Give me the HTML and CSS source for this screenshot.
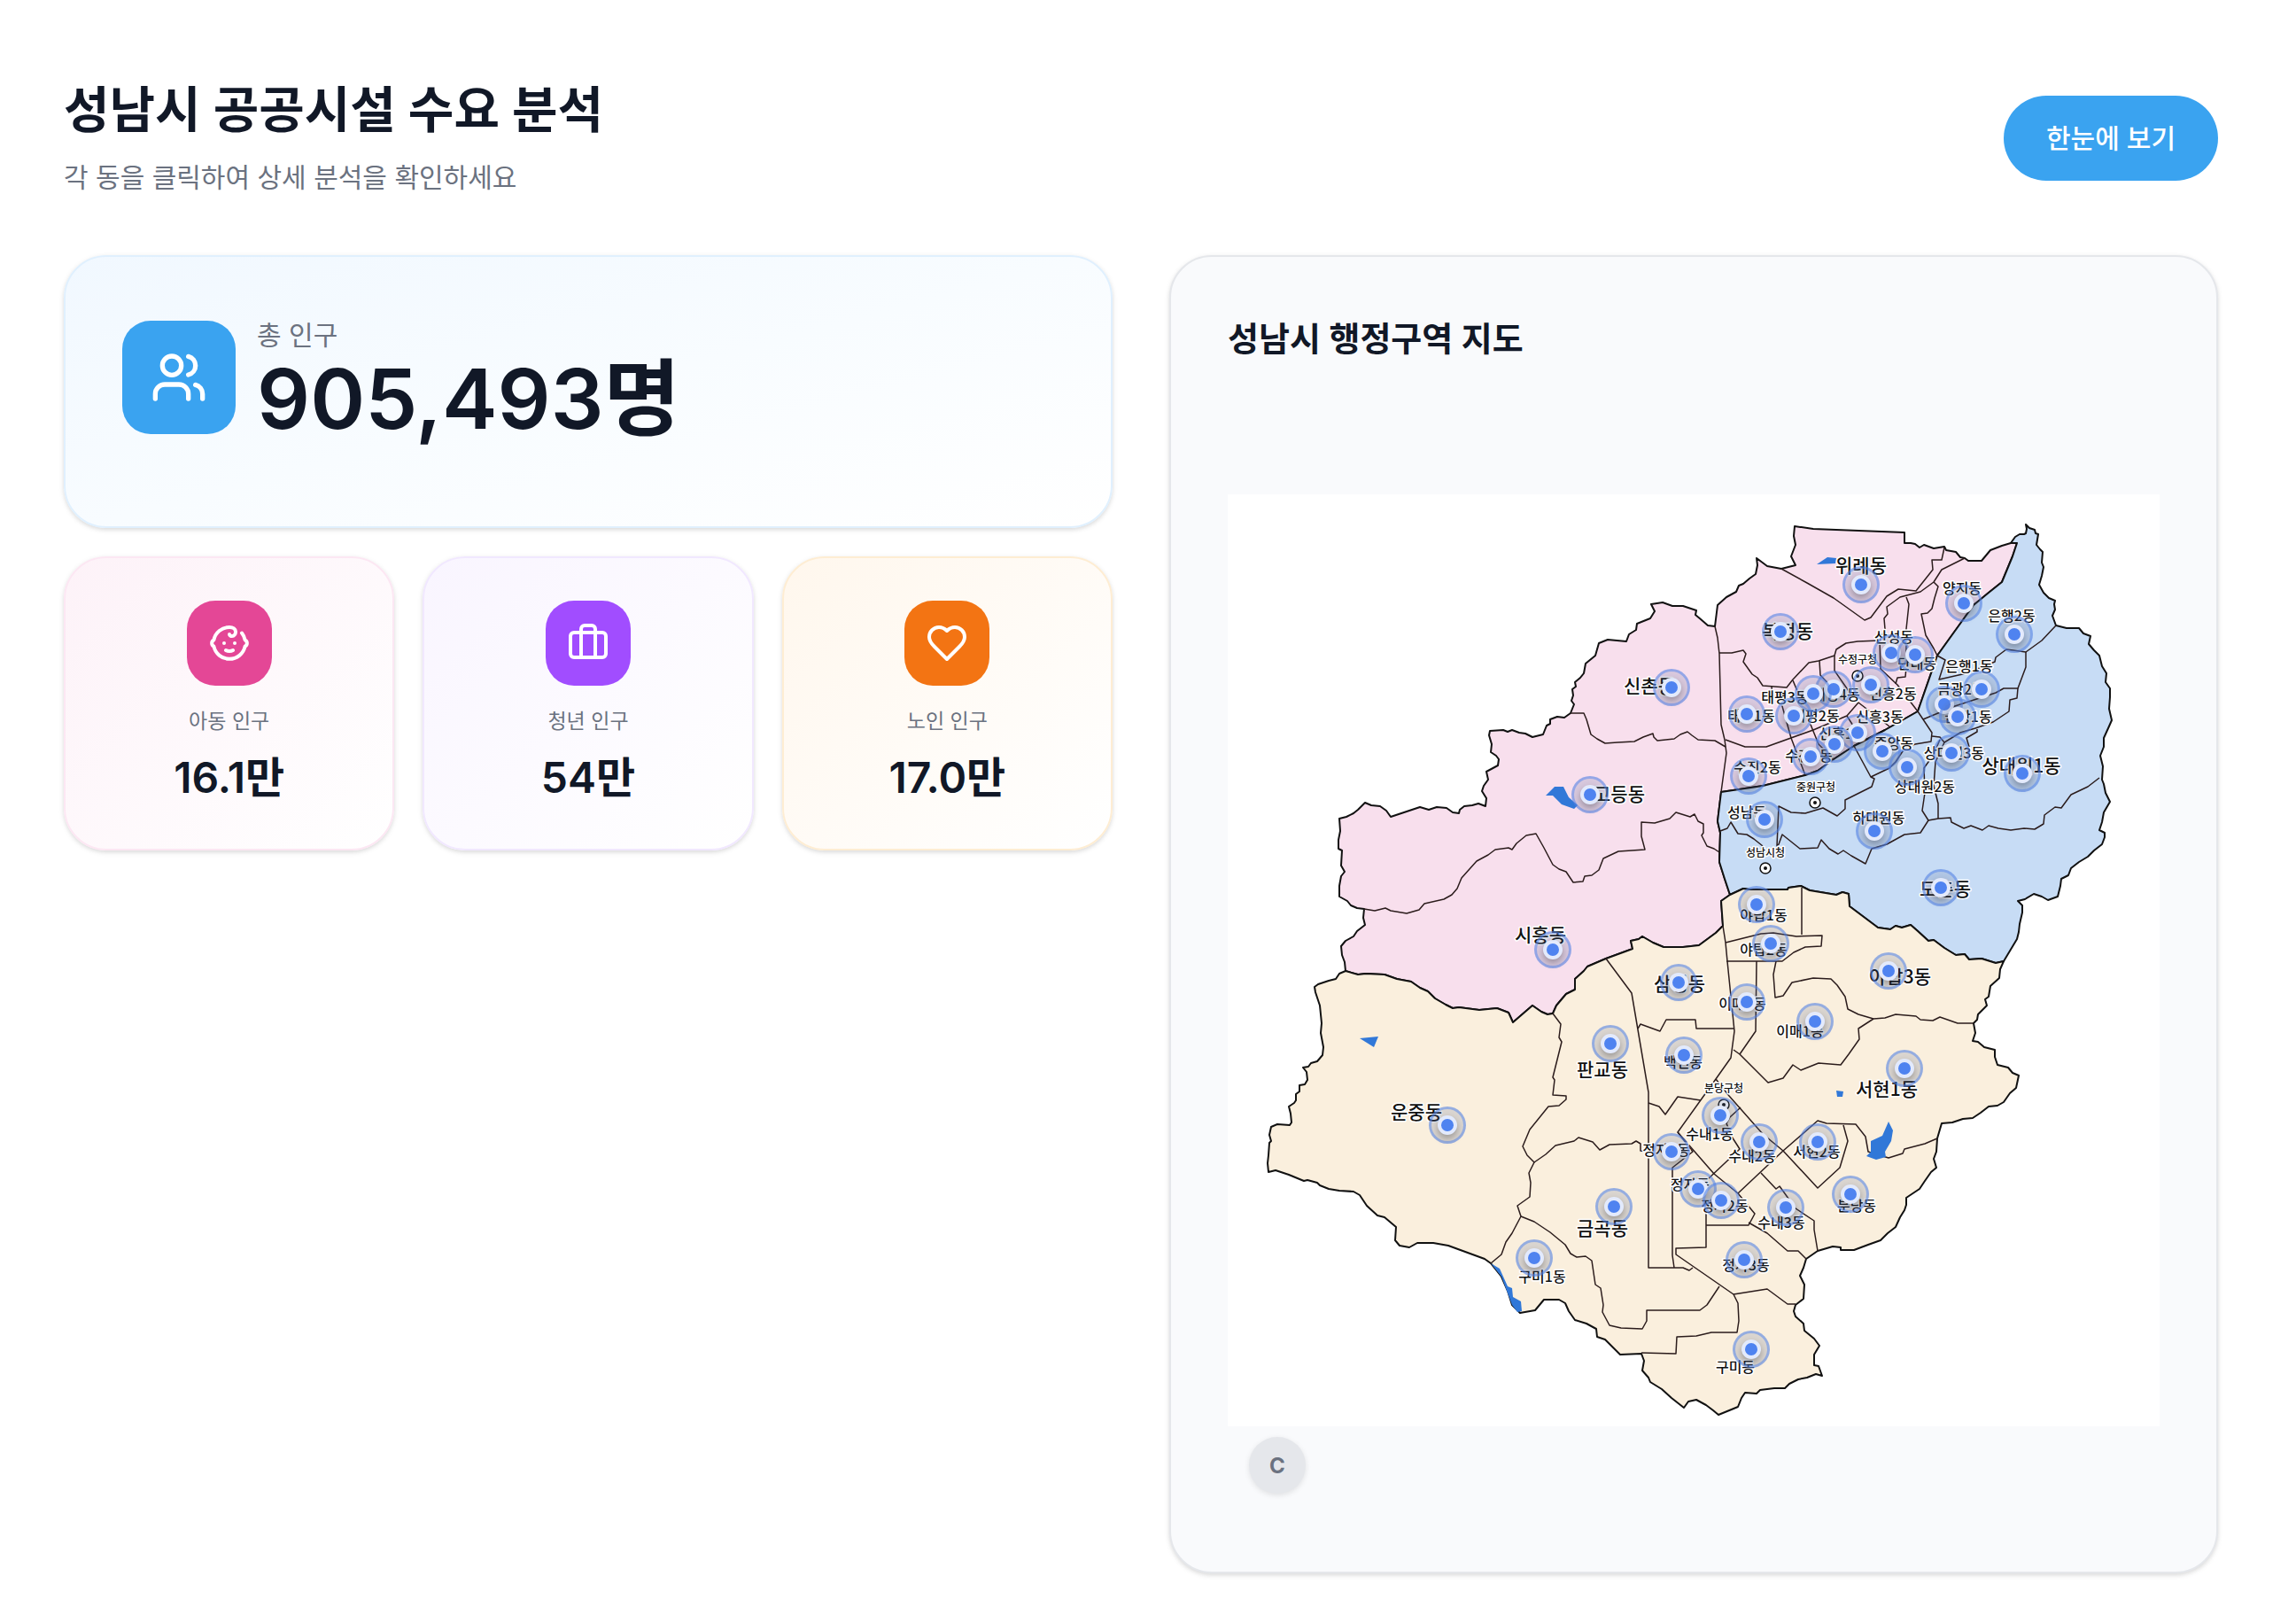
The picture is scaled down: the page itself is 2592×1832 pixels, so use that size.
FILE: index.html
```html
<!DOCTYPE html>
<html lang="ko">
<head>
    <meta charset="UTF-8">
    <meta name="viewport" content="width=device-width, initial-scale=1.0">
    <title>성남시 공공시설 수요 분석</title>
    <link rel="stylesheet" href="styles.css">
</head>
<body>
    <div class="page">
        <header class="page-header">
            <div>
                <h1>성남시 공공시설 수요 분석</h1>
                <p class="subtitle">각 동을 클릭하여 상세 분석을 확인하세요</p>
            </div>
            <button type="button" class="overview-btn">한눈에 보기</button>
        </header>

        <main class="dashboard">
            <section class="stats">
                <div class="card total-card">
                    <div class="icon-box icon-large">
                        <svg viewBox="0 0 24 24"><path d="M16 21v-2a4 4 0 0 0-4-4H6a4 4 0 0 0-4 4v2"/><circle cx="9" cy="7" r="4"/><path d="M22 21v-2a4 4 0 0 0-3-3.87"/><path d="M16 3.13a4 4 0 0 1 0 7.75"/></svg>
                    </div>
                    <div>
                        <p class="total-label">총 인구</p>
                        <p class="total-value">905,493명</p>
                    </div>
                </div>

                <div class="age-cards">
                    <div class="card age-card child">
                        <div class="icon-box">
                            <svg viewBox="0 0 24 24"><path d="M9 12h.01"/><path d="M15 12h.01"/><path d="M10 16c.5.3 1.2.5 2 .5s1.5-.2 2-.5"/><path d="M19 6.3a9 9 0 0 1 1.8 3.9 2 2 0 0 1 0 3.6 9 9 0 0 1-17.6 0 2 2 0 0 1 0-3.6A9 9 0 0 1 12 3c2 0 3.5 1.1 3.5 2.5s-.9 2.5-2 2.5c-.8 0-1.5-.4-1.5-1"/></svg>
                        </div>
                        <p class="age-label">아동 인구</p>
                        <p class="age-value">16.1만</p>
                    </div>
                    <div class="card age-card youth">
                        <div class="icon-box">
                            <svg viewBox="0 0 24 24"><path d="M16 20V4a2 2 0 0 0-2-2h-4a2 2 0 0 0-2 2v16"/><rect width="20" height="14" x="2" y="6" rx="2"/></svg>
                        </div>
                        <p class="age-label">청년 인구</p>
                        <p class="age-value">54만</p>
                    </div>
                    <div class="card age-card senior">
                        <div class="icon-box">
                            <svg viewBox="0 0 24 24"><path d="M19 14c1.49-1.46 3-3.21 3-5.5A5.5 5.5 0 0 0 16.5 3c-1.76 0-3 .5-4.5 2-1.5-1.5-2.74-2-4.5-2A5.5 5.5 0 0 0 2 8.5c0 2.3 1.5 4.05 3 5.5l7 7Z"/></svg>
                        </div>
                        <p class="age-label">노인 인구</p>
                        <p class="age-value">17.0만</p>
                    </div>
                </div>
            </section>

            <section class="card map-card">
                <h2>성남시 행정구역 지도</h2>
                <div class="map-area">
                    <div class="map" id="map">
                        <svg class="map-svg" viewBox="1386 558 1052 1052">
                            <!-- 수정구 -->
                            <path class="gu sujeong" d="M1519 1096L1518 1086 1515 1078 1514 1068 1519 1062 1528 1057 1532 1051 1541 1044 1539 1036 1540 1026 1532 1025 1525 1022 1521 1017 1512 1012 1512 1000 1514 989 1518 984 1514 977 1515 960 1511 958 1511 948 1513 938 1512 924 1520 922 1528 918 1533 914 1541 906 1548 909 1558 910 1565 915 1570 922 1603 911 1613 914 1622 911 1633 912 1640 917 1647 918 1648 914 1653 910 1662 909 1669 907 1677 910 1678 901 1673 893 1675 887 1680 880 1678 871 1691 864 1692 857 1689 853 1683 849 1684 840 1681 830 1682 825 1697 824 1702 826 1707 824 1715 827 1722 828 1730 832 1742 829 1746 819 1750 817 1750 812 1758 809 1766 810 1773 805 1775 800 1777 795 1774 791 1776 785 1775 778 1779 775 1778 770 1784 765 1788 760 1790 749 1801 740 1805 726 1815 722 1836 724 1839 716 1847 711 1848 704 1863 698 1868 690 1864 682 1877 680 1888 684 1900 684 1915 689 1914 694 1920 699 1928 706 1936 707 1939 683 1949 674 1960 668 1963 661 1968 659 1975 653 1982 648 1984 638 1983 630 1995 639 2011 642 2027 638 2022 628 2027 615 2025 605 2026 594 2047 597 2150 601 2150 613 2157 613 2162 614 2167 618 2172 615 2183 619 2195 617 2197 621 2208 623 2213 629 2218 630 2222 633 2237 633 2247 621 2260 616 2270 613 2277 613 2272 628 2260 657 2245 669 2228 683 2187 740 2165 803 2128 824 2093 842 2070 857 2052 870 2038 875 1990 887 1943 894 1939 927 1942 940 1941 973 1947 992 1953 1010 1943 1017 1945 1045 1937 1053 1918 1067 1900 1069 1878 1069 1866 1064 1854 1057 1850 1060 1841 1062 1843 1071 1813 1082 1792 1091 1788 1096 1778 1105 1778 1117 1768 1122 1757 1135 1753 1144 1747 1145 1740 1142 1730 1135 1708 1154 1703 1143 1690 1138 1670 1140 1647 1137 1640 1138 1632 1134 1620 1127 1612 1119 1603 1115 1593 1108 1577 1105 1563 1100 1542 1099 1533 1100Z"/>
                            <!-- 중원구 -->
                            <path class="gu jungwon" d="M2277 613L2270 613 2275 606 2280 603 2285 603 2287 602 2288 597 2287 592 2291 596 2297 598 2298 602 2301 603 2299 615 2303 620 2306 623 2305 635 2307 640 2305 650 2302 660 2307 669 2313 675 2320 678 2319 682 2320 688 2317 695 2321 706 2333 709 2347 709 2352 715 2360 718 2358 727 2364 734 2370 740 2373 752 2378 760 2377 770 2382 777 2382 787 2381 800 2384 813 2380 822 2375 833 2375 843 2371 853 2374 865 2373 880 2375 885 2377 895 2382 905 2375 917 2373 928 2370 937 2376 940 2376 945 2373 953 2364 960 2357 967 2347 973 2338 980 2335 988 2327 992 2326 1000 2323 1012 2312 1016 2305 1012 2296 1009 2286 1015 2278 1017 2283 1022 2283 1030 2280 1043 2279 1052 2277 1060 2271 1070 2262 1085 2253 1087 2237 1082 2223 1083 2218 1077 2208 1078 2195 1070 2183 1061 2177 1062 2165 1051 2157 1044 2147 1047 2140 1045 2134 1049 2120 1047 2088 1023 2087 1009 2080 1007 2073 1010 2043 1005 2033 1000 2019 1002 2018 1004 1975 1004 1968 1003 1953 1010 1947 992 1941 973 1942 940 1939 927 1943 894 1990 887 2038 875 2052 870 2070 857 2093 842 2128 824 2165 803 2187 740 2228 683 2245 669 2260 657 2272 628Z"/>
                            <!-- 분당구 -->
                            <path class="gu bundang" d="M2262 1085L2258 1094 2257 1104 2247 1113 2245 1125 2241 1128 2243 1135 2233 1145 2232 1151 2228 1155 2230 1166 2227 1175 2233 1176 2240 1182 2252 1185 2252 1193 2255 1202 2267 1205 2272 1211 2279 1214 2276 1228 2269 1234 2262 1244 2255 1248 2245 1249 2236 1256 2227 1262 2216 1263 2204 1267 2192 1268 2187 1285 2186 1300 2183 1308 2186 1318 2180 1323 2173 1333 2167 1342 2152 1352 2152 1360 2150 1366 2145 1374 2140 1385 2131 1392 2123 1400 2109 1405 2093 1411 2078 1411 2078 1408 2069 1407 2052 1412 2039 1421 2036 1431 2032 1440 2037 1450 2036 1466 2027 1473 2025 1480 2027 1486 2036 1494 2037 1502 2048 1511 2054 1519 2048 1529 2048 1541 2053 1542 2057 1553 2050 1551 2040 1555 2030 1557 2020 1562 2015 1567 2003 1567 1987 1569 1983 1573 1970 1572 1966 1578 1962 1588 1940 1597 1934 1592 1926 1586 1915 1580 1906 1582 1901 1589 1887 1578 1876 1568 1863 1560 1861 1555 1854 1547 1856 1536 1853 1528 1829 1529 1812 1512 1803 1509 1802 1500 1791 1494 1778 1490 1771 1480 1767 1471 1760 1467 1743 1467 1733 1479 1716 1482 1707 1473 1702 1457 1695 1441 1683 1426 1676 1421 1635 1406 1618 1403 1600 1403 1591 1408 1580 1406 1575 1400 1576 1385 1563 1374 1555 1372 1543 1361 1535 1349 1528 1345 1512 1344 1500 1342 1490 1338 1487 1335 1476 1332 1472 1333 1455 1326 1440 1321 1432 1323 1431 1313 1432 1304 1433 1290 1435 1288 1433 1281 1435 1272 1442 1269 1456 1270 1458 1267 1457 1257 1455 1249 1461 1245 1463 1242 1463 1235 1467 1232 1467 1225 1473 1224 1476 1219 1475 1210 1471 1205 1477 1204 1480 1200 1487 1198 1493 1191 1494 1182 1491 1166 1492 1155 1490 1135 1485 1120 1484 1114 1488 1111 1500 1107 1508 1105 1512 1099 1519 1096 1533 1100 1542 1099 1563 1100 1577 1105 1593 1108 1603 1115 1612 1119 1620 1127 1632 1134 1640 1138 1647 1137 1670 1140 1690 1138 1703 1143 1708 1154 1730 1135 1740 1142 1747 1145 1753 1144 1757 1135 1768 1122 1778 1117 1778 1105 1788 1096 1792 1091 1813 1082 1843 1071 1841 1062 1850 1060 1854 1057 1866 1064 1878 1069 1900 1069 1918 1067 1937 1053 1945 1045 1943 1017 1953 1010 1968 1003 1975 1004 2018 1004 2019 1002 2033 1000 2043 1005 2073 1010 2080 1007 2087 1009 2088 1023 2120 1047 2134 1049 2140 1045 2147 1047 2157 1044 2165 1051 2177 1062 2183 1061 2195 1070 2208 1078 2218 1077 2223 1083 2237 1082 2253 1087Z"/>
                            <g class="dong-lines">
                                <path d="M1773 805L1788 805 1791 812 1796 829 1803 834 1812 839 1826 838 1845 837 1855 832 1866 828 1867 832 1871 836 1890 834 1897 829 1905 826 1910 830 1917 835 1936 836 1948 843"/>
                                <path d="M1936 707L1939 720 1941 738 1943 818 1947 835 1949 850 1943 894"/>
                                <path d="M1540 1026L1552 1028 1564 1025 1570 1028 1588 1031 1602 1027 1608 1020 1630 1015 1639 1010 1645 1003 1650 991 1667 972 1680 965 1688 959 1703 957 1707 959 1712 952 1723 943 1734 941 1743 957 1753 976 1760 981 1768 984 1776 996 1787 995 1789 989 1797 988 1805 982 1810 969 1827 961 1857 959 1853 944 1853 928 1868 929 1885 924 1892 917 1908 922 1913 919 1917 927 1923 930 1923 940 1921 943 1923 947 1927 955 1935 958 1941 962"/>
                                <path d="M2011 642L2040 658 2070 675 2105 700 2112 697 2130 673 2143 665 2163 667 2182 643 2181 632 2192 632 2195 618"/>
                                <path d="M2218 630L2192 643 2183 657 2168 668 2145 674 2130 685 2131 693 2127 698 2128 710 2122 723"/>
                                <path d="M2183 657L2188 662 2184 675 2181 687 2176 692 2169 693 2174 717 2183 732 2187 740"/>
                                <path d="M2152 674L2155 682 2152 710 2152 753 2151 764 2142 765 2140 772"/>
                                <path d="M1941 737L1955 737 1968 734 1971 738 1968 747 1978 761 1984 765 1990 774 2017 776 2024 767 2042 748 2053 746 2071 740 2073 733 2084 726 2097 724 2122 723 2123 755 2142 773 2165 803 2171 812 2181 827 2180 837 2162 840"/>
                                <path d="M2071 740L2071 757 2087 780M2054 746L2055 762 2070 778M2024 768L2029 780M2000 775L2001 785 2010 790 2022 833 2038 875"/>
                                <path d="M2040 808L2053 840 2070 857M1948 835L1970 843 1994 843 2047 824 2085 808 2098 793 2133 820M2085 808L2097 827"/>
                                <path d="M2321 706L2305 723 2287 736 2265 733 2253 742 2252 747 2220 760 2189 767 2196 745 2187 740"/>
                                <path d="M2287 736L2287 753 2278 777 2262 777 2253 782 2207 797 2171 812"/>
                                <path d="M2278 777L2277 788 2269 790 2268 803 2250 815 2230 822 2213 827 2195 838 2190 832 2181 831"/>
                                <path d="M2232 823L2232 826 2220 833 2223 843 2205 850M2093 842L2112 877 2133 867 2140 860 2150 845 2162 840"/>
                                <path d="M2112 877L2116 879 2113 888 2083 903 2083 913 2074 921 2058 912 2038 918 2022 917 2008 910 2006 955 2008 953 2012 942 2032 958 2052 957 2056 948 2065 958 2075 964 2081 960 2090 966 2106 975 2113 958 2130 953 2150 942 2168 940 2177 926 2170 915 2173 895 2172 867 2182 853 2190 835"/>
                                <path d="M2177 926L2188 924 2202 923 2203 928 2217 935 2225 932 2238 937 2245 932 2256 935 2270 937 2285 935 2297 936 2307 930 2308 920 2320 911 2327 912 2338 897 2357 888 2370 878M2188 924L2188 907 2183 887 2185 860 2195 838"/>
                                <path d="M1942 938L1950 935 1954 928 1962 941 1972 942 1980 947 1990 955"/>
                                <path d="M2034 1002L2034 1055M1948 1064L1988 1054 2002 1053 2028 1057 2057 1056 2056 1068 2038 1069 2025 1075 2012 1085 1949 1085"/>
                                <path d="M1945 1045L1948 1064 1950 1085 1958 1164 1954 1194 1937 1218 1894 1278 1935 1325 1962 1347 1981 1370 1974 1383 1926 1383"/>
                                <path d="M1983 1085L1982 1164 1964 1190M1957 1185L1964 1190 1996 1222 2013 1217 2024 1202 2033 1208 2053 1200 2078 1202 2087 1190 2099 1173 2098 1161 2115 1150"/>
                                <path d="M2005 1085L2002 1100 2004 1126 2013 1124 2023 1109 2047 1104 2067 1105 2074 1112 2083 1125 2086 1139 2098 1145 2115 1150 2128 1149 2140 1145 2163 1147 2168 1151 2182 1152 2190 1148 2210 1155 2228 1155"/>
                                <path d="M1813 1082L1842 1121 1861 1233 1861 1431 1900 1431 1907 1434 1911 1431"/>
                                <path d="M1849 1161L1852 1156 1874 1164 1881 1151 1914 1151 1915 1161 1957 1161M1861 1245L1873 1249 1880 1258 1894 1238 1920 1242"/>
                                <path d="M1753 1144L1762 1156 1760 1171 1763 1176 1753 1216 1755 1219 1753 1236 1768 1237 1768 1241 1760 1248 1748 1249 1727 1275 1719 1294 1724 1304 1732 1312 1745 1303 1756 1293 1777 1288 1782 1284 1798 1289 1806 1298 1817 1292 1842 1291 1847 1288 1852 1291 1852 1299 1861 1300"/>
                                <path d="M1732 1312L1726 1324 1728 1335 1727 1351 1713 1361 1717 1373 1707 1392 1700 1402 1695 1416 1683 1426"/>
                                <path d="M1717 1373L1732 1379 1750 1391 1767 1405 1773 1415 1780 1419 1790 1418 1797 1423 1801 1450 1807 1454 1810 1473 1809 1481 1817 1496 1830 1499 1854 1500 1859 1491 1859 1479 1919 1479 1927 1473 1941 1452"/>
                                <path d="M1894 1278L1911 1300 1888 1318 1888 1417 1890 1431M1926 1369L1926 1408 1892 1409 1892 1416 1957 1461 1962 1471 1963 1491 1961 1504 1932 1504 1915 1508 1893 1509 1892 1528 1853 1527"/>
                                <path d="M1957 1461L1995 1455 2018 1472 2027 1472M1974 1380L1995 1392 2018 1412 2030 1412 2039 1421"/>
                                <path d="M1962 1347L2013 1299 2052 1265 2062 1268 2095 1269 2106 1283 2109 1300 2132 1307 2148 1302 2150 1297 2173 1291 2187 1285"/>
                                <path d="M2081 1270L2086 1288 2077 1318 2052 1341 2013 1299 1990 1280 1952 1237 1937 1218"/>
                                <path d="M1988 1324L2005 1342 2009 1339 2027 1364 2048 1378 2048 1388 2052 1412M1928 1331L1964 1297 1955 1283 1949 1268 1953 1261 1965 1250"/>
                            </g>
                            <g class="water">
                                <path d="M1745 898L1755 888 1765 888 1771 900 1781 909 1777 913 1763 908 1753 898Z"/>
                                <path d="M1535 1172L1556 1170 1551 1182Z"/>
                                <path d="M2051 637L2063 629 2073 630 2072 636Z"/>
                                <path d="M2073 1231L2081 1232 2080 1238 2074 1238Z"/>
                                <path d="M2132 1266L2137 1276 2135 1288 2128 1300 2129 1306 2118 1309 2107 1305 2112 1300 2112 1288 2125 1282Z"/>
                                <path d="M1683 1426L1693 1432 1702 1452 1707 1454 1708 1464 1717 1469 1718 1480 1713 1481 1707 1473 1695 1441Z"/>
                            </g>
                            <g class="offices">
                                <circle cx="2097" cy="763" r="6"/><circle class="dot" cx="2097" cy="763" r="2"/>
                                <circle cx="2049" cy="906" r="6"/><circle class="dot" cx="2049" cy="906" r="2"/>
                                <circle cx="1993" cy="980" r="6"/><circle class="dot" cx="1993" cy="980" r="2"/>
                                <circle cx="1946" cy="1247" r="6"/><circle class="dot" cx="1946" cy="1247" r="2"/>
                            </g>
                            <g class="names names-large">
                                <text x="2101" y="646">위례동</text>
                                <text x="2018" y="720">복정동</text>
                                <text x="1862" y="782">신촌동</text>
                                <text x="1828" y="904">고등동</text>
                                <text x="1739" y="1063">시흥동</text>
                                <text x="2282" y="872">상대원1동</text>
                                <text x="2196" y="1011">도촌동</text>
                                <text x="2145" y="1110">야탑3동</text>
                                <text x="1896" y="1118">삼평동</text>
                                <text x="1809" y="1215">판교동</text>
                                <text x="1599" y="1263">운중동</text>
                                <text x="1809" y="1394">금곡동</text>
                                <text x="2130" y="1237">서현1동</text>
                            </g>
                            <g class="names names-medium">
                                <text x="2215" y="670">양지동</text>
                                <text x="2271" y="701">은행2동</text>
                                <text x="2138" y="725">산성동</text>
                                <text x="2164" y="755">단대동</text>
                                <text x="2223" y="758">은행1동</text>
                                <text x="2137" y="789">신흥2동</text>
                                <text x="2214" y="784">금광2동</text>
                                <text x="2015" y="793">태평3동</text>
                                <text x="2073" y="790">태평4동</text>
                                <text x="1977" y="814">태평1동</text>
                                <text x="2050" y="814">태평2동</text>
                                <text x="2122" y="815">신흥3동</text>
                                <text x="2222" y="815">금광1동</text>
                                <text x="2080" y="834">신흥1동</text>
                                <text x="2138" y="845">중앙동</text>
                                <text x="2206" y="856">상대원3동</text>
                                <text x="2042" y="859">수진1동</text>
                                <text x="1984" y="872">수진2동</text>
                                <text x="2173" y="894">상대원2동</text>
                                <text x="2121" y="929">하대원동</text>
                                <text x="1972" y="923">성남동</text>
                                <text x="1991" y="1039">야탑1동</text>
                                <text x="1991" y="1078">야탑2동</text>
                                <text x="1967" y="1139">이매2동</text>
                                <text x="2032" y="1170">이매1동</text>
                                <text x="1900" y="1205">백현동</text>
                                <text x="1930" y="1286">수내1동</text>
                                <text x="1978" y="1311">수내2동</text>
                                <text x="2051" y="1306">서현2동</text>
                                <text x="1881" y="1304">정자1동</text>
                                <text x="1908" y="1343">정자동</text>
                                <text x="1947" y="1367">정자2동</text>
                                <text x="1971" y="1434">정자3동</text>
                                <text x="2011" y="1386">수내3동</text>
                                <text x="2096" y="1367">분당동</text>
                                <text x="1741" y="1447">구미1동</text>
                                <text x="1959" y="1549">구미동</text>
                            </g>
                            <g class="names names-small">
                                <text x="2097" y="749">수정구청</text>
                                <text x="2050" y="893">중원구청</text>
                                <text x="1993" y="967">성남시청</text>
                                <text x="1946" y="1233">분당구청</text>
                            </g>
                        </svg>
                    </div>
                    <button type="button" class="corner-btn">C</button>
                </div>
            </section>
        </main>
    </div>

    <script src="script.js"></script>
</body>
</html>
```

FILE: styles.css
```css
* {
    box-sizing: border-box;
}
body {
    margin: 0;
    padding: 88px 88px 56px 72px;
    font-family: Inter, "Noto Sans CJK KR", sans-serif;
    color: #111827;
    background: #ffffff;
}
h1, h2, p {
    margin: 0;
}
button {
    border: none;
    font-family: inherit;
    cursor: pointer;
}

/* header */
.page-header {
    display: flex;
    justify-content: space-between;
    align-items: center;
    margin-bottom: 64px;
}
.page-header h1 {
    font-size: 56px;
    line-height: 72px;
    font-weight: 600;
}
.subtitle {
    margin-top: 16px;
    font-size: 30px;
    line-height: 48px;
    color: #6b7280;
}
.overview-btn {
    padding: 24px 48px;
    border-radius: 48px;
    background: #3aa3f0;
    color: #ffffff;
    font-size: 30px;
    line-height: 48px;
    font-weight: 500;
}

/* layout */
.dashboard {
    display: grid;
    grid-template-columns: 1fr 1fr;
    gap: 64px;
}
.stats {
    display: flex;
    flex-direction: column;
    gap: 32px;
}
.card {
    border: 2px solid #e5e7eb;
    border-radius: 48px;
    box-shadow: 0 2px 6px rgba(0, 0, 0, 0.1), 0 2px 4px rgba(0, 0, 0, 0.06);
}

/* population cards */
.total-card {
    display: flex;
    align-items: center;
    gap: 24px;
    padding: 64px 64px 96px;
    background: linear-gradient(165deg, #f1f8ff, #f8fcff 50%, #ffffff);
    border-color: #e0f0fe;
}
.icon-box {
    display: flex;
    justify-content: center;
    align-items: center;
    width: 96px;
    height: 96px;
    border-radius: 32px;
    background: #3aa3f0;
}
.icon-box svg {
    width: 48px;
    height: 48px;
    fill: none;
    stroke: #ffffff;
    stroke-width: 2;
    stroke-linecap: round;
    stroke-linejoin: round;
}
.icon-large {
    width: 128px;
    height: 128px;
}
.icon-large svg {
    width: 64px;
    height: 64px;
}
.total-label {
    font-size: 30px;
    line-height: 48px;
    color: #6b7280;
}
.total-value {
    font-size: 94px;
    line-height: 96px;
    font-weight: 600;
}
.age-cards {
    display: grid;
    grid-template-columns: repeat(3, 1fr);
    gap: 32px;
}
.age-card {
    display: flex;
    flex-direction: column;
    align-items: center;
    padding: 48px;
}
.age-label {
    margin: 24px 0 16px;
    font-size: 23px;
    line-height: 32px;
    color: #6b7280;
}
.age-value {
    font-size: 48px;
    line-height: 64px;
    font-weight: 600;
}
.child {
    background: linear-gradient(135deg, #fdf2f8, #ffffff);
    border-color: #fce7f3;
}
.child .icon-box {
    background: #e44796;
}
.youth {
    background: linear-gradient(135deg, #f9f5ff, #ffffff);
    border-color: #f1e8ff;
}
.youth .icon-box {
    background: #a14dff;
}
.senior {
    background: linear-gradient(135deg, #fff7ed, #ffffff);
    border-color: #feedd3;
}
.senior .icon-box {
    background: #f37413;
}

/* map */
.map-card {
    padding: 64px;
    background: #f9fafc;
}
.map-card h2 {
    margin-bottom: 48px;
    font-size: 38px;
    line-height: 56px;
    font-weight: 600;
}
.map-area {
    position: relative;
    padding: 100px 0;
}
.map {
    position: relative;
    background: #ffffff;
}
.map-svg {
    display: block;
    width: 100%;
}
.gu {
    stroke: #111111;
    stroke-width: 2;
    stroke-linejoin: round;
}
.sujeong {
    fill: #f8dfed;
}
.jungwon {
    fill: #c7dcf5;
}
.bundang {
    fill: #faefdd;
}
.dong-lines {
    fill: none;
    stroke: #2b1c1c;
    stroke-width: 1.5;
    stroke-linejoin: round;
}
.water {
    fill: #3178d8;
}
.offices {
    fill: #ffffff;
    stroke: #111111;
    stroke-width: 1.5;
}
.offices .dot {
    fill: #111111;
    stroke: none;
}
.names {
    text-anchor: middle;
    font-family: "Noto Sans CJK KR", sans-serif;
    font-weight: 500;
    fill: #111111;
    stroke: #ffffff;
    stroke-width: 3;
    stroke-linejoin: round;
    paint-order: stroke;
}
.names-large {
    font-size: 21px;
}
.names-medium {
    font-size: 16px;
}
.names-small {
    font-size: 12px;
}
.marker {
    position: absolute;
    display: flex;
    justify-content: center;
    align-items: center;
    width: 42px;
    height: 42px;
    padding: 0;
    border: 3px solid rgba(79, 131, 240, 0.5);
    border-radius: 50%;
    background: rgba(90, 110, 160, 0.2);
    transform: translate(-50%, -50%);
}
.marker span {
    width: 22px;
    height: 22px;
    border: 4px solid #e3eafc;
    border-radius: 50%;
    background: #4f83f0;
    box-shadow: 0 4px 8px rgba(0, 0, 0, 0.3);
}
.corner-btn {
    position: absolute;
    left: 24px;
    bottom: 24px;
    width: 64px;
    height: 64px;
    border-radius: 50%;
    background: #e5e7eb;
    color: #6b7280;
    font-size: 24px;
    font-weight: 700;
    box-shadow: 0 2px 6px rgba(0, 0, 0, 0.1);
}
```

FILE: script.js
```javascript
// Map viewBox: origin and size
const MAP_X = 1386;
const MAP_Y = 558;
const MAP_SIZE = 1052;

const dongs = [
    ['위례동', 2101, 660], ['양지동', 2217, 681], ['은행2동', 2274, 716], ['복정동', 2010, 713],
    ['산성동', 2135, 737], ['단대동', 2162, 739], ['은행1동', 2237, 778], ['신흥2동', 2112, 773],
    ['태평4동', 2070, 778], ['태평3동', 2047, 783], ['금광2동', 2195, 795], ['태평1동', 1972, 806],
    ['태평2동', 2025, 808], ['금광1동', 2210, 809], ['신흥3동', 2097, 827], ['신흥1동', 2071, 840],
    ['수진1동', 2044, 854], ['중앙동', 2125, 848], ['상대원3동', 2203, 850], ['상대원2동', 2153, 866],
    ['상대원1동', 2283, 873], ['수진2동', 1974, 876], ['성남동', 1992, 925], ['하대원동', 2116, 938],
    ['도촌동', 2191, 1002], ['야탑1동', 1983, 1021], ['야탑2동', 1999, 1065], ['야탑3동', 2132, 1096],
    ['신촌동', 1887, 776], ['고등동', 1795, 897], ['시흥동', 1753, 1072], ['삼평동', 1895, 1109],
    ['이매2동', 1972, 1131], ['이매1동', 2049, 1153], ['백현동', 1901, 1191], ['서현1동', 2150, 1206],
    ['수내1동', 1942, 1259], ['수내2동', 1986, 1289], ['서현2동', 2052, 1289], ['정자1동', 1887, 1300],
    ['정자동', 1917, 1342], ['정자2동', 1943, 1355], ['수내3동', 2016, 1363], ['분당동', 2089, 1348],
    ['정자3동', 1969, 1422], ['구미동', 1977, 1523], ['판교동', 1818, 1178], ['운중동', 1634, 1270],
    ['금곡동', 1822, 1362], ['구미1동', 1732, 1420]
];

const map = document.getElementById('map');

dongs.forEach(([name, x, y]) => {
    const marker = document.createElement('button');
    marker.type = 'button';
    marker.className = 'marker';
    marker.setAttribute('aria-label', name);
    marker.style.left = `${(x - MAP_X) / MAP_SIZE * 100}%`;
    marker.style.top = `${(y - MAP_Y) / MAP_SIZE * 100}%`;
    marker.appendChild(document.createElement('span'));
    map.appendChild(marker);
});
```
